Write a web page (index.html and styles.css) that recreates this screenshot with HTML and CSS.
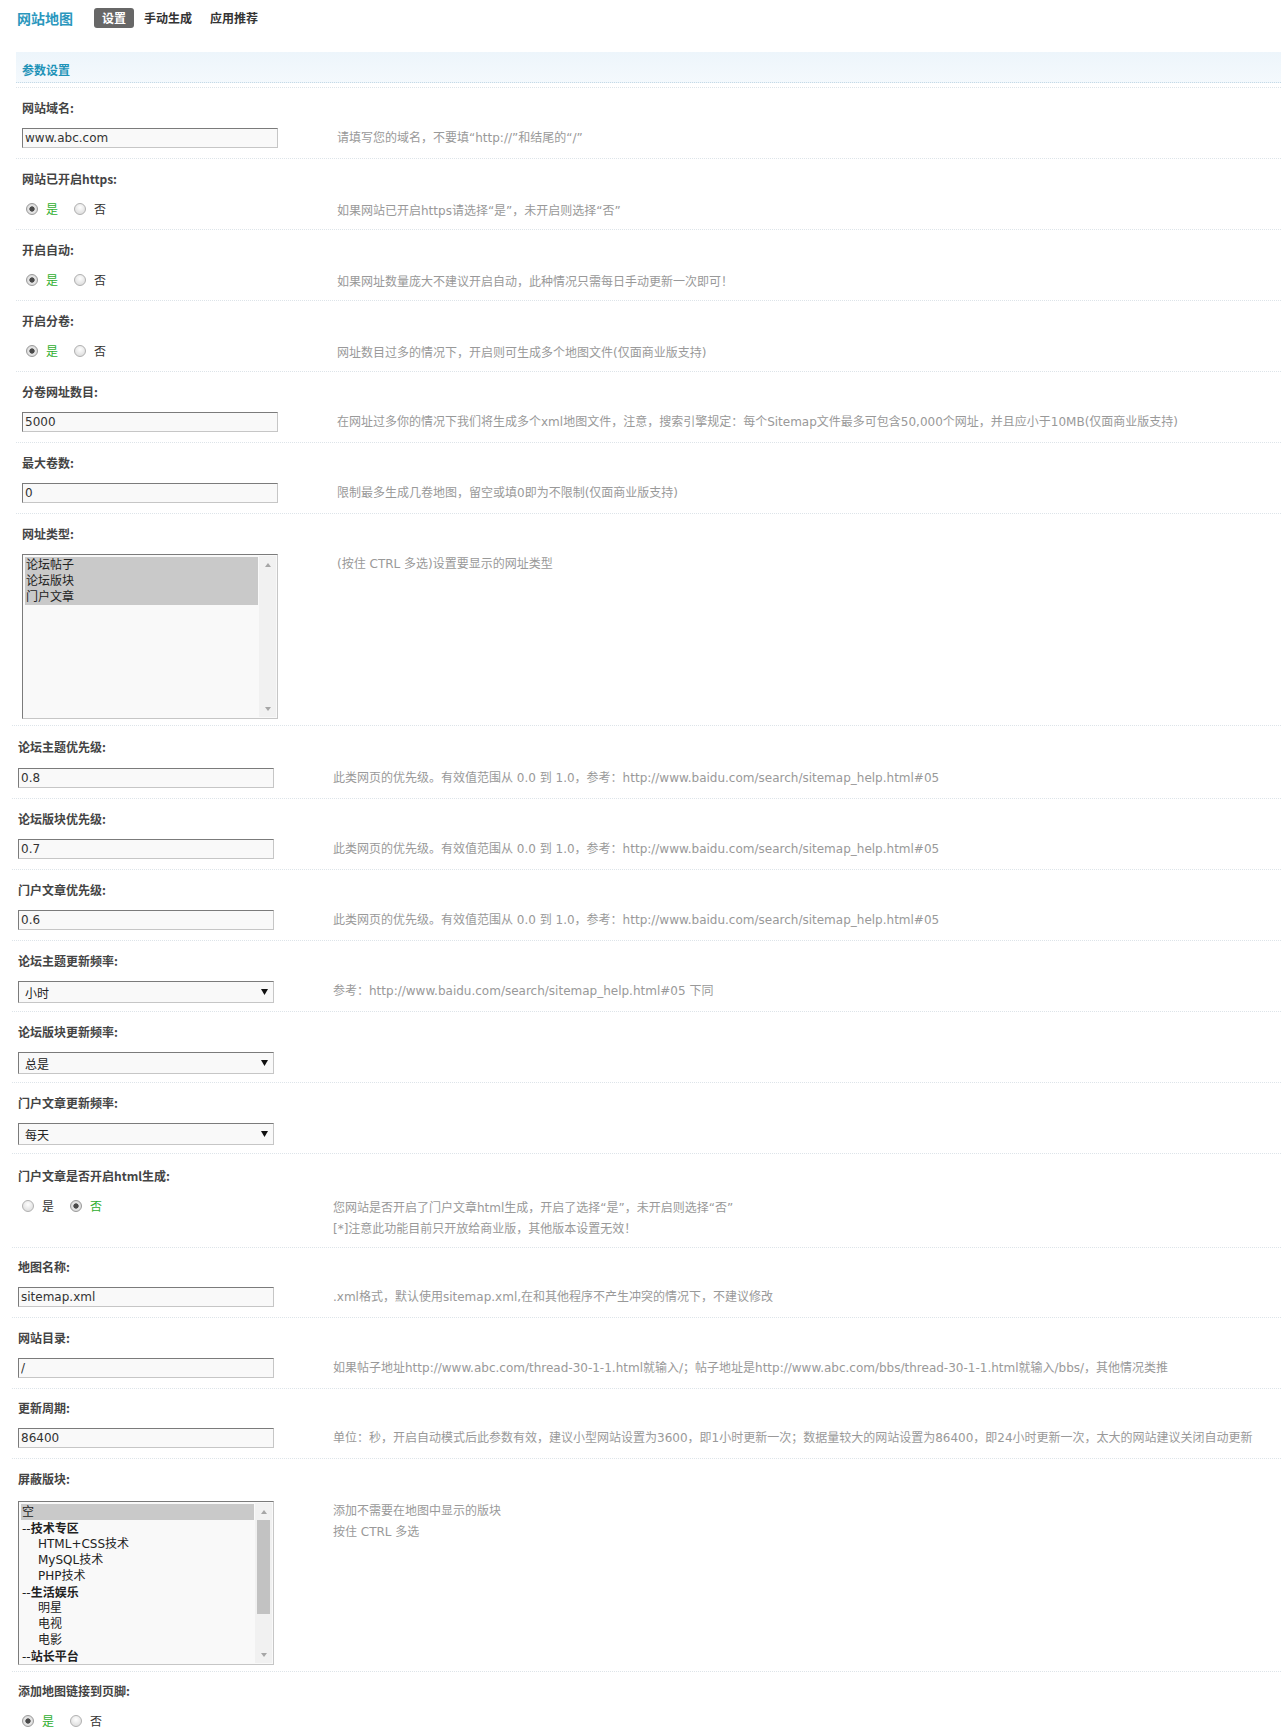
FILE: index.html
```html
<!DOCTYPE html>
<html lang="zh-CN">
<head>
<meta charset="utf-8">
<title>网站地图 - 设置</title>
<link rel="stylesheet" href="styles.css">
</head>
<body>
<div class="page">
  <div class="topnav">
    <h3 class="title">网站地图</h3>
    <ul class="tabs">
      <li class="tab active">设置</li>
      <li class="tab">手动生成</li>
      <li class="tab">应用推荐</li>
    </ul>
  </div>

  <div class="sec sec-a">
    <div class="partition">参数设置</div>

    <div class="row">
      <div class="lbl">网站域名:</div>
      <div class="ctl">
        <div class="field"><input class="txt" type="text" value="www.abc.com"></div>
        <div class="desc">请填写您的域名，不要填“http://”和结尾的“/”</div>
      </div>
    </div>

    <div class="row">
      <div class="lbl">网站已开启https:</div>
      <div class="ctl rad">
        <div class="field">
          <label class="rlab on"><input class="rd" type="radio" name="https" checked>是</label>
          <label class="rlab"><input class="rd" type="radio" name="https">否</label>
        </div>
        <div class="desc">如果网站已开启https请选择“是”，未开启则选择“否”</div>
      </div>
    </div>

    <div class="row">
      <div class="lbl">开启自动:</div>
      <div class="ctl rad">
        <div class="field">
          <label class="rlab on"><input class="rd" type="radio" name="auto" checked>是</label>
          <label class="rlab"><input class="rd" type="radio" name="auto">否</label>
        </div>
        <div class="desc">如果网址数量庞大不建议开启自动，此种情况只需每日手动更新一次即可！</div>
      </div>
    </div>

    <div class="row">
      <div class="lbl">开启分卷:</div>
      <div class="ctl rad">
        <div class="field">
          <label class="rlab on"><input class="rd" type="radio" name="vol" checked>是</label>
          <label class="rlab"><input class="rd" type="radio" name="vol">否</label>
        </div>
        <div class="desc">网址数目过多的情况下，开启则可生成多个地图文件(仅面商业版支持)</div>
      </div>
    </div>

    <div class="row">
      <div class="lbl">分卷网址数目:</div>
      <div class="ctl">
        <div class="field"><input class="txt" type="text" value="5000"></div>
        <div class="desc">在网址过多你的情况下我们将生成多个xml地图文件，注意，搜索引擎规定：每个Sitemap文件最多可包含50,000个网址，并且应小于10MB(仅面商业版支持)</div>
      </div>
    </div>

    <div class="row">
      <div class="lbl">最大卷数:</div>
      <div class="ctl">
        <div class="field"><input class="txt" type="text" value="0"></div>
        <div class="desc">限制最多生成几卷地图，留空或填0即为不限制(仅面商业版支持)</div>
      </div>
    </div>

    <div class="row">
      <div class="lbl">网址类型:</div>
      <div class="ctl lb-row lbh1">
        <div class="field lbf">
          <div class="listbox lb1">
            <div class="opts">
              <div class="opt picked">论坛帖子</div>
              <div class="opt picked">论坛版块</div>
              <div class="opt picked">门户文章</div>
            </div>
            <div class="sb">
              <div class="sbbtn"><span class="up"></span></div>
              <div class="track"></div>
              <div class="sbbtn"><span class="dn"></span></div>
            </div>
          </div>
        </div>
        <div class="desc">(按住 CTRL 多选)设置要显示的网址类型</div>
      </div>
    </div>
  </div>

  <div class="sec sec-b">
    <div class="row first">
      <div class="lbl">论坛主题优先级:</div>
      <div class="ctl">
        <div class="field"><input class="txt" type="text" value="0.8"></div>
        <div class="desc">此类网页的优先级。有效值范围从 0.0 到 1.0，参考：http://www.baidu.com/search/sitemap_help.html#05</div>
      </div>
    </div>

    <div class="row">
      <div class="lbl">论坛版块优先级:</div>
      <div class="ctl">
        <div class="field"><input class="txt" type="text" value="0.7"></div>
        <div class="desc">此类网页的优先级。有效值范围从 0.0 到 1.0，参考：http://www.baidu.com/search/sitemap_help.html#05</div>
      </div>
    </div>

    <div class="row">
      <div class="lbl">门户文章优先级:</div>
      <div class="ctl">
        <div class="field"><input class="txt" type="text" value="0.6"></div>
        <div class="desc">此类网页的优先级。有效值范围从 0.0 到 1.0，参考：http://www.baidu.com/search/sitemap_help.html#05</div>
      </div>
    </div>

    <div class="row">
      <div class="lbl">论坛主题更新频率:</div>
      <div class="ctl sel-row">
        <div class="field sf">
          <div class="selwrap">
            <select class="dropdown"><option>小时</option></select>
            <svg class="selarrow" viewBox="0 0 7 6" width="7" height="6"><path d="M0 0H7L3.5 6Z" fill="#111"/></svg>
          </div>
        </div>
        <div class="desc">参考：http://www.baidu.com/search/sitemap_help.html#05 下同</div>
      </div>
    </div>

    <div class="row">
      <div class="lbl">论坛版块更新频率:</div>
      <div class="ctl sel-row">
        <div class="field sf">
          <div class="selwrap">
            <select class="dropdown"><option>总是</option></select>
            <svg class="selarrow" viewBox="0 0 7 6" width="7" height="6"><path d="M0 0H7L3.5 6Z" fill="#111"/></svg>
          </div>
        </div>
      </div>
    </div>

    <div class="row">
      <div class="lbl">门户文章更新频率:</div>
      <div class="ctl sel-row">
        <div class="field sf">
          <div class="selwrap">
            <select class="dropdown"><option>每天</option></select>
            <svg class="selarrow" viewBox="0 0 7 6" width="7" height="6"><path d="M0 0H7L3.5 6Z" fill="#111"/></svg>
          </div>
        </div>
      </div>
    </div>

    <div class="row html-row">
      <div class="lbl">门户文章是否开启html生成:</div>
      <div class="ctl rad two">
        <div class="field">
          <label class="rlab"><input class="rd" type="radio" name="html">是</label>
          <label class="rlab on"><input class="rd" type="radio" name="html" checked>否</label>
        </div>
        <div class="desc"><div class="dl">您网站是否开启了门户文章html生成，开启了选择“是”，未开启则选择“否”</div><div class="dl">[*]注意此功能目前只开放给商业版，其他版本设置无效！</div></div>
      </div>
    </div>

    <div class="row r70">
      <div class="lbl">地图名称:</div>
      <div class="ctl">
        <div class="field"><input class="txt" type="text" value="sitemap.xml"></div>
        <div class="desc">.xml格式，默认使用sitemap.xml,在和其他程序不产生冲突的情况下，不建议修改</div>
      </div>
    </div>

    <div class="row">
      <div class="lbl">网站目录:</div>
      <div class="ctl">
        <div class="field"><input class="txt" type="text" value="/"></div>
        <div class="desc">如果帖子地址http://www.abc.com/thread-30-1-1.html就输入/；帖子地址是http://www.abc.com/bbs/thread-30-1-1.html就输入/bbs/，其他情况类推</div>
      </div>
    </div>

    <div class="row r70">
      <div class="lbl">更新周期:</div>
      <div class="ctl">
        <div class="field"><input class="txt" type="text" value="86400"></div>
        <div class="desc">单位：秒，开启自动模式后此参数有效，建议小型网站设置为3600，即1小时更新一次；数据量较大的网站设置为86400，即24小时更新一次，太大的网站建议关闭自动更新</div>
      </div>
    </div>

    <div class="row lb2-row">
      <div class="lbl">屏蔽版块:</div>
      <div class="ctl lb-row lbh2">
        <div class="field lbf">
          <div class="listbox lb2">
            <div class="opts">
              <div class="opt picked">空</div>
              <div class="opt">--<b>技术专区</b></div>
              <div class="opt ind">HTML+CSS技术</div>
              <div class="opt ind">MySQL技术</div>
              <div class="opt ind">PHP技术</div>
              <div class="opt">--<b>生活娱乐</b></div>
              <div class="opt ind">明星</div>
              <div class="opt ind">电视</div>
              <div class="opt ind">电影</div>
              <div class="opt">--<b>站长平台</b></div>
            </div>
            <div class="sb">
              <div class="sbbtn"><span class="up"></span></div>
              <div class="track"><div class="thumb"></div></div>
              <div class="sbbtn"><span class="dn"></span></div>
            </div>
          </div>
        </div>
        <div class="desc"><div class="dl">添加不需要在地图中显示的版块</div><div class="dl">按住 CTRL 多选</div></div>
      </div>
    </div>

    <div class="row last">
      <div class="lbl">添加地图链接到页脚:</div>
      <div class="ctl rad">
        <div class="field">
          <label class="rlab on"><input class="rd" type="radio" name="foot" checked>是</label>
          <label class="rlab"><input class="rd" type="radio" name="foot">否</label>
        </div>
      </div>
    </div>
  </div>
</div>
</body>
</html>
```

FILE: styles.css
```css
html, body {
  margin: 0;
  padding: 0;
  background: #fff;
}

body {
  font-family: "DejaVu Sans", "Noto Sans CJK SC", sans-serif;
  font-size: 12px;
  color: #333;
}

.page {
  width: 1281px;
  height: 1731px;
  box-sizing: border-box;
  padding-top: 8px;
  overflow: hidden;
}

/* top navigation */
.topnav {
  display: flex;
  align-items: center;
  height: 20px;
  padding-left: 17px;
  margin-bottom: 24px;
}

.title {
  margin: 0 21px 0 0;
  height: 20px;
  font: bold 14px/20px "Noto Sans CJK SC", sans-serif;
  color: #2a97bd;
}

.tabs {
  display: flex;
  list-style: none;
  margin: 0;
  padding: 0;
}

.tab {
  height: 20px;
  padding: 0 8px;
  margin-right: 2px;
  font: bold 12px/20px "Noto Sans CJK SC", sans-serif;
  color: #333;
  border-radius: 3px;
}

.tab.active {
  background: #676767;
  color: #fff;
}

/* sections */
.sec-a {
  margin-left: 16px;
}

.sec-b {
  margin-left: 12px;
}

.partition {
  height: 22px;
  padding: 8px 0 0 6px;
  font: bold 12px/20px "Noto Sans CJK SC", sans-serif;
  color: #1f93b8;
  background: linear-gradient(#edf5fb, #f4f9fd);
  border-bottom: 1px dotted #c4d9e6;
  margin-bottom: 4px;
}

.row {
  border-top: 1px dotted #dde4e9;
}

.lbl {
  height: 16px;
  padding: 12px 0 12px 6px;
  font: bold 12px/16px "Noto Sans CJK SC", sans-serif;
  color: #444;
  white-space: nowrap;
}

.row.first .lbl {
  padding-top: 13px;
  padding-bottom: 13px;
}

.row.r70 .lbl {
  padding-top: 11px;
}

.row.html-row .lbl {
  padding-top: 14px;
}

.row.lb2-row .lbl {
  padding-bottom: 14px;
}

.row.last .lbl {
  padding-top: 11px;
}

.ctl {
  display: flex;
  align-items: flex-start;
  height: 20px;
  padding: 0 0 10px 6px;
}

.ctl.sel-row {
  height: 22px;
  padding-bottom: 8px;
}

.ctl.lb-row {
  padding-bottom: 6px;
}

.ctl.lbh1 {
  height: 165px;
}

.ctl.lbh2 {
  height: 164px;
}

.ctl.two {
  height: 44px;
  padding-bottom: 7px;
}

.row.last .ctl {
  height: 18px;
  padding-bottom: 0;
}

.field {
  width: 256px;
  height: 20px;
  flex: none;
  display: flex;
  align-items: center;
}

.field.sf {
  height: 22px;
}

.field.lbf {
  height: auto;
}

.desc {
  margin-left: 59px;
  height: 21px;
  line-height: 21px;
  color: #999;
  white-space: nowrap;
}

.ctl.rad .desc {
  padding-top: 2px;
}

.ctl.two .desc,
.ctl.lb-row .desc {
  height: auto;
}

.dl {
  height: 21px;
  line-height: 21px;
}

/* text input */
.txt {
  width: 256px;
  height: 20px;
  box-sizing: border-box;
  margin: 0;
  padding: 0 2px;
  border: 1px solid;
  border-color: #7b7b7b #c6c6c6 #c6c6c6 #7b7b7b;
  background: #f9f9f9;
  font: 12px "DejaVu Sans", "Noto Sans CJK SC", sans-serif;
  color: #333;
  outline: none;
}

/* radio */
.rlab {
  display: inline-flex;
  align-items: center;
  height: 20px;
  margin-right: 12px;
  line-height: 20px;
  font-family: "Noto Sans CJK SC", sans-serif;
  color: #333;
}

.rlab.on {
  color: #2fae2f;
}

.rd {
  -webkit-appearance: none;
  appearance: none;
  width: 12px;
  height: 12px;
  box-sizing: border-box;
  margin: 0 8px 0 4px;
  border: 1px solid #b0b0b0;
  border-radius: 50%;
  background: radial-gradient(circle at 50% 35%, #fefefe, #d6d6d6);
}

.rd:checked {
  border-color: #9a9a9a;
  background: radial-gradient(circle, #4a4a4a 0, #4a4a4a 2.3px, #e8e8e8 3px, #cdcdcd 100%);
}

/* select */
.selwrap {
  position: relative;
  width: 256px;
  height: 22px;
}

.dropdown {
  -webkit-appearance: none;
  appearance: none;
  width: 256px;
  height: 22px;
  box-sizing: border-box;
  margin: 0;
  padding: 0 0 0 6px;
  border: 1px solid;
  border-color: #7b7b7b #c6c6c6 #c6c6c6 #7b7b7b;
  border-radius: 0;
  background: #f9f9f9;
  font: 12px "Noto Sans CJK SC", sans-serif;
  color: #222;
  outline: none;
}

.selarrow {
  position: absolute;
  right: 6px;
  top: 8px;
  pointer-events: none;
}

/* listbox */
.listbox {
  display: flex;
  width: 256px;
  box-sizing: border-box;
  border: 1px solid;
  border-color: #7b7b7b #c6c6c6 #c6c6c6 #7b7b7b;
  background: #f9f9f9;
}

.lb1 {
  height: 165px;
}

.lb2 {
  height: 164px;
}

.opts {
  flex: 1;
  min-width: 0;
  padding: 2px 1px 0 2px;
  overflow: hidden;
}

.opt {
  height: 16px;
  line-height: 16px;
  padding-left: 1px;
  white-space: nowrap;
  overflow: hidden;
  font-family: "DejaVu Sans", "Noto Sans CJK SC", sans-serif;
  color: #222;
}

.opt b {
  font-family: "Noto Sans CJK SC", sans-serif;
  color: #222;
}

.opt.picked {
  background: #c9c9c9;
}

.opt.ind {
  padding-left: 17px;
}

.sb {
  width: 17px;
  flex: none;
  display: flex;
  flex-direction: column;
  margin: 1px 1px 1px 0;
  background: #f1f1f1;
}

.sbbtn {
  height: 17px;
  flex: none;
  display: flex;
  align-items: center;
  justify-content: center;
}

.up {
  width: 0;
  height: 0;
  border-left: 3.5px solid transparent;
  border-right: 3.5px solid transparent;
  border-bottom: 4px solid #a6a6a6;
}

.dn {
  width: 0;
  height: 0;
  border-left: 3.5px solid transparent;
  border-right: 3.5px solid transparent;
  border-top: 4px solid #a6a6a6;
}

.track {
  flex: 1;
  display: flex;
  flex-direction: column;
}

.thumb {
  height: 94px;
  margin: 0 2px;
  background: #c2c2c2;
}
```
